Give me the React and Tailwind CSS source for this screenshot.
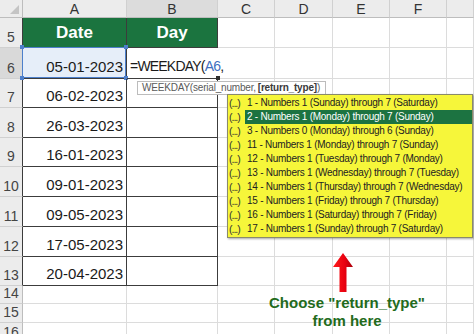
// Excel sheet: WEEKDAY formula with return_type picker
const GRID = "border-r border-b border-[#dcdcdc]";
const DARK = "border-r border-b border-[#3c3c3c]";

const COLS = ["A", "B", "C", "D", "E", "F", ""];

const DATES = [
  { n: 6, h: "h-[31px]", date: "05-01-2023" },
  { n: 7, h: "h-[29px]", date: "06-02-2023" },
  { n: 8, h: "h-[30px]", date: "26-03-2023" },
  { n: 9, h: "h-[29px]", date: "16-01-2023" },
  { n: 10, h: "h-[30px]", date: "09-01-2023" },
  { n: 11, h: "h-[30px]", date: "09-05-2023" },
  { n: 12, h: "h-[30px]", date: "17-05-2023" },
  { n: 13, h: "h-[29px]", date: "20-04-2023" },
];

const EMPTY_ROWS = [
  { n: 14, h: "h-[18px]" },
  { n: 15, h: "h-[19px]" },
  { n: 16, h: "h-[20px]" },
];

const OPTIONS = [
  "1 - Numbers 1 (Sunday) through 7 (Saturday)",
  "2 - Numbers 1 (Monday) through 7 (Sunday)",
  "3 - Numbers 0 (Monday) through 6 (Sunday)",
  "11 - Numbers 1 (Monday) through 7 (Sunday)",
  "12 - Numbers 1 (Tuesday) through 7 (Monday)",
  "13 - Numbers 1 (Wednesday) through 7 (Tuesday)",
  "14 - Numbers 1 (Thursday) through 7 (Wednesday)",
  "15 - Numbers 1 (Friday) through 7 (Thursday)",
  "16 - Numbers 1 (Saturday) through 7 (Friday)",
  "17 - Numbers 1 (Sunday) through 7 (Saturday)",
];

function RowHead({ n, h, dark, active }) {
  return (
    <div
      className={`${h} flex items-end justify-center pb-[3px] border-b border-[#d0d0d0] text-[14px] leading-none text-[#444] ${
        active ? "bg-[#d9d9d9]" : "bg-[#ececec]"
      } ${dark ? "border-r border-r-[#3c3c3c]" : "border-r border-r-[#bdbdbd]"}`}
    >
      {n}
    </div>
  );
}

function EmptyCells({ h, from = 3 }) {
  return COLS.slice(from - 1).map((c, i) => (
    <div key={i} className={`${h} ${GRID}`} />
  ));
}

export default function App() {
  return (
    <div className="relative w-[474px] h-[334px] overflow-hidden bg-white font-['Liberation_Sans',Arial,sans-serif]">
      <div className="grid grid-cols-[23px_104px_91px_57px_58px_57px_57px_1fr]">
        {/* column headers */}
        <div className="h-[18px] relative bg-[#ececec] border-r border-b border-[#bdbdbd]">
          <div className="absolute right-[3px] bottom-[3px] w-0 h-0 border-l-[9px] border-l-transparent border-b-[9px] border-b-[#c4c4c4]" />
        </div>
        {COLS.map((c, i) => (
          <div
            key={i}
            className={`h-[18px] flex items-center justify-center text-[14px] leading-none text-[#333] border-r border-r-[#d0d0d0] border-b border-b-[#bdbdbd] ${
              c === "B" ? "bg-[#dcdcdc]" : "bg-[#ececec]"
            }`}
          >
            {c}
          </div>
        ))}

        {/* row 5: headers */}
        <RowHead n={5} h="h-[30px]" dark />
        <div className={`h-[30px] ${DARK} bg-[#1b743f] flex items-center justify-center text-white font-bold text-[17px]`}>
          Date
        </div>
        <div className={`h-[30px] ${DARK} bg-[#1b743f] flex items-center justify-center text-white font-bold text-[17px]`}>
          Day
        </div>
        <EmptyCells h="h-[30px]" />

        {DATES.map((r) => (
          <div key={r.n} className="contents">
            <RowHead n={r.n} h={r.h} dark active={r.n === 6} />
            <div
              className={`${r.h} ${DARK} relative flex items-end justify-end pr-[3px] pb-[4px] text-[15px] leading-none text-[#1a1a1a] ${
                r.n === 6 ? "bg-[#e6eef9]" : ""
              }`}
            >
              {r.date}
              {r.n === 6 && (
                <div className="absolute -left-[1px] -top-[1px] right-0 bottom-0 border-[1.5px] border-[#4d7fcb] pointer-events-none">
                  <span className="absolute -left-[3px] -top-[3px] w-[4px] h-[4px] bg-[#4d7fcb]" />
                  <span className="absolute -right-[3px] -top-[3px] w-[4px] h-[4px] bg-[#4d7fcb]" />
                  <span className="absolute -left-[3px] -bottom-[3px] w-[4px] h-[4px] bg-[#4d7fcb]" />
                  <span className="absolute -right-[3px] -bottom-[3px] w-[4px] h-[4px] bg-[#4d7fcb]" />
                </div>
              )}
            </div>
            {r.n === 6 ? (
              <div className={`${r.h} border-b border-[#3c3c3c] relative z-10 flex items-end pl-[3px] pb-[5px] whitespace-nowrap text-[14px] tracking-[-0.8px] leading-none text-[#1a1a1a]`}>
                =WEEKDAY(<span className="text-[#3f6fc0]">A6</span>,
                <span className="absolute -right-[2px] -bottom-[2px] w-[4px] h-[4px] bg-[#2e2e2e]" />
              </div>
            ) : (
              <div className={`${r.h} ${DARK}`} />
            )}
            <EmptyCells h={r.h} />
          </div>
        ))}

        {EMPTY_ROWS.map((r) => (
          <div key={r.n} className="contents">
            <RowHead n={r.n} h={r.h} />
            <EmptyCells h={r.h} from={1} />
          </div>
        ))}
      </div>

      {/* function tooltip */}
      <div className="absolute left-[137px] top-[81px] w-[189px] h-[14px] z-20 bg-white border border-[#bcbcbc] flex items-center pl-[4px] whitespace-nowrap text-[10px] tracking-[-0.2px] leading-none text-[#5a5a5a]">
        WEEKDAY(serial_number, <b className="ml-[2px] text-[#3a3a3a]">[return_type]</b>)
      </div>

      {/* return_type list */}
      <div className="absolute left-[227px] top-[94px] w-[246px] z-20 bg-[#f6f63a] border border-[#8a8a6a] shadow-[1px_1px_2px_rgba(0,0,0,0.35)] py-[1px]">
        {OPTIONS.map((o, i) => (
          <div key={o} className="h-[14px] flex items-center">
            <span className="w-[17px] pl-[1px] text-[10.5px] leading-none text-[#333] tracking-[-1px] whitespace-nowrap">(...)</span>
            <span
              className={`flex-1 h-full flex items-center pl-[2px] text-[10px] tracking-[-0.25px] leading-none whitespace-nowrap ${
                i === 1 ? "bg-[#1c7341] text-white" : "text-[#222]"
              }`}
            >
              {o}
            </span>
          </div>
        ))}
      </div>

      {/* red arrow */}
      <svg className="absolute left-[332px] top-[253px] z-20" width="22" height="40" viewBox="0 0 22 40">
        <defs>
          <linearGradient id="arr" x1="0" x2="1" y1="0" y2="0">
            <stop offset="0" stopColor="#ff1a1a" />
            <stop offset="0.6" stopColor="#e80010" />
            <stop offset="1" stopColor="#a8000a" />
          </linearGradient>
        </defs>
        <path d="M11 0 L21 14 L14.5 14 L14.5 39 L7.5 39 L7.5 14 L1 14 Z" fill="url(#arr)" />
      </svg>

      {/* annotation */}
      <div className="absolute left-[347px] top-[294px] -translate-x-1/2 z-20 text-center whitespace-nowrap text-[15px] leading-[18px] font-bold text-[#236b1c]">
        Choose "return_type"
        <br />
        from here
      </div>
    </div>
  );
}
